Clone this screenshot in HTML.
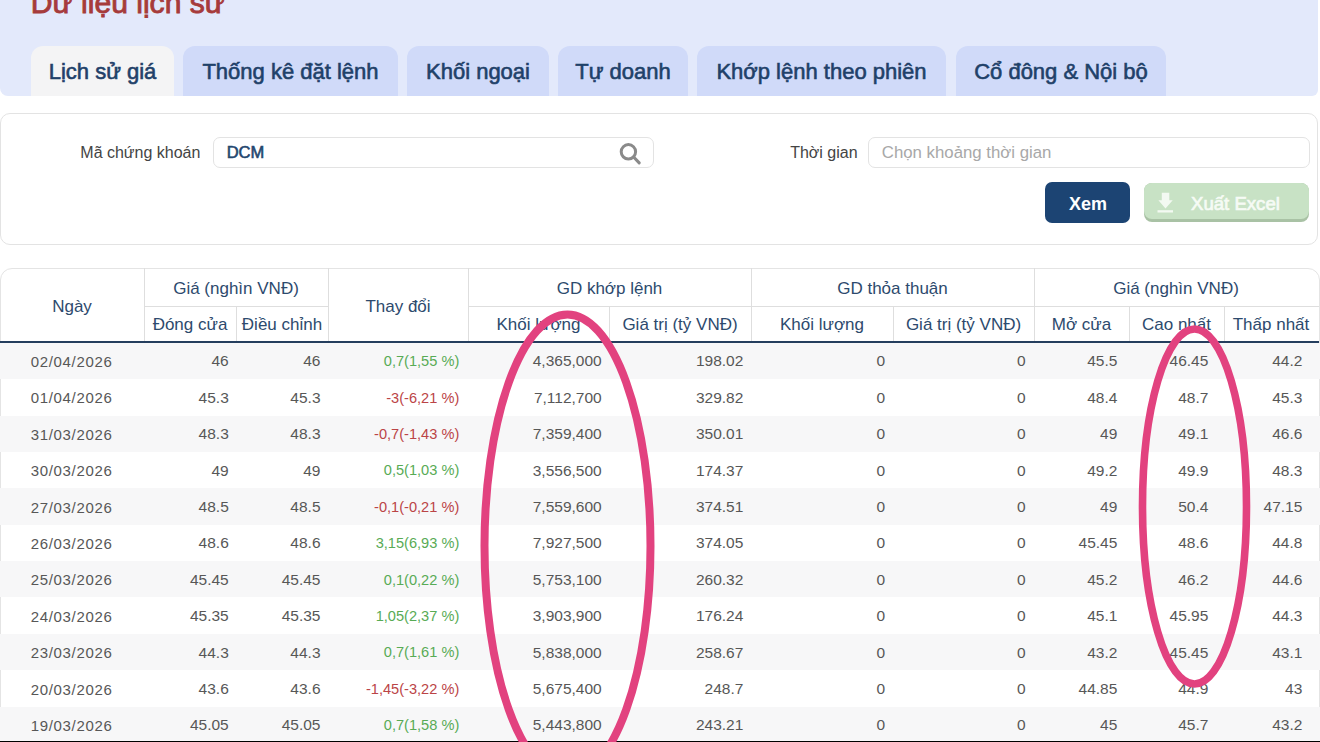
<!DOCTYPE html>
<html><head><meta charset="utf-8">
<style>
*{box-sizing:border-box;margin:0;padding:0}
html,body{width:1320px;height:742px;overflow:hidden;background:#fff;font-family:"Liberation Sans",sans-serif;position:relative}
.t{position:absolute;white-space:nowrap}
.box{position:absolute}
.hdr{left:0;top:-20px;width:1317.8px;height:115.5px;background:#e3e9fb;border-radius:0 0 6px 8px}
.tab{top:46px;height:49.5px;background:#d0daf9;border-radius:12px 12px 0 0}
.tab.act{background:#f4f4f5}
.tabt{color:#1f4169;-webkit-text-stroke:0.6px #1f4169}
.filter{left:0;top:113px;width:1317.5px;height:131.5px;border:1px solid #e3e3e3;border-radius:10px;background:#fff}
.inp{border:1px solid #e3e3e3;border-radius:7px;background:#fff}
.vl{position:absolute;width:1px;background:#dedede}
.hl{position:absolute;height:1px;background:#dedede}
.hc{color:#2d4a6d}
.row{position:absolute;left:0;width:1320px;height:36.4px}
.row.g{background:#f7f7f8}
.c{color:#575757}
.up{color:#58ab55}.dn{color:#bb4446}
</style></head><body>
<div class="box hdr"></div>

<div class="t" style="left:30.80px;top:-11.99px;font-size:30.1px;line-height:30.1px;color:#a63b3b;-webkit-text-stroke:0.9px #a63b3b">Dữ liệu lịch sử</div>
<div class="box tab act" style="left:31px;width:143px"></div>
<div class="t tabt" style="left:-197.50px;width:600px;text-align:center;top:60.77px;font-size:22px;line-height:22px;">Lịch sử giá</div>
<div class="box tab" style="left:183px;width:215px"></div>
<div class="t tabt" style="left:-9.50px;width:600px;text-align:center;top:60.77px;font-size:22px;line-height:22px;">Thống kê đặt lệnh</div>
<div class="box tab" style="left:407px;width:142px"></div>
<div class="t tabt" style="left:178.00px;width:600px;text-align:center;top:60.77px;font-size:22px;line-height:22px;">Khối ngoại</div>
<div class="box tab" style="left:558px;width:130px"></div>
<div class="t tabt" style="left:323.00px;width:600px;text-align:center;top:60.77px;font-size:22px;line-height:22px;">Tự doanh</div>
<div class="box tab" style="left:697px;width:249px"></div>
<div class="t tabt" style="left:521.50px;width:600px;text-align:center;top:60.77px;font-size:22px;line-height:22px;">Khớp lệnh theo phiên</div>
<div class="box tab" style="left:956px;width:210px"></div>
<div class="t tabt" style="left:761.00px;width:600px;text-align:center;top:60.77px;font-size:22px;line-height:22px;">Cổ đông &amp; Nội bộ</div>
<div class="box filter"></div>
<div class="t" style="left:80.30px;top:144.75px;font-size:16px;line-height:16px;color:#444">Mã chứng khoán</div>
<div class="box inp" style="left:212.5px;top:137.4px;width:441.5px;height:30.3px"></div>
<div class="t" style="left:226.70px;top:144.33px;font-size:16.5px;line-height:16.5px;color:#24476f;-webkit-text-stroke:0.6px #24476f">DCM</div>
<div class="t" style="left:790.20px;top:144.95px;font-size:16px;line-height:16px;color:#444">Thời gian</div>
<div class="box inp" style="left:867.5px;top:137.2px;width:442px;height:30.5px"></div>
<div class="t" style="left:881.80px;top:145.28px;font-size:16.8px;line-height:16.8px;color:#a8a8a8">Chọn khoảng thời gian</div>
<div class="box" style="left:1045px;top:182.3px;width:85px;height:40.4px;background:#1c4473;border-radius:7px"></div>
<div class="t" style="left:1069.00px;top:194.76px;font-size:18px;line-height:18px;color:#fff;font-weight:bold">Xem</div>
<div class="box" style="left:1144px;top:182.5px;width:164.5px;height:39.5px;background:#a9c2a5;border-radius:8px"></div>
<div class="box" style="left:1144px;top:182.5px;width:164.5px;height:36.8px;background:#c8e2c5;border-radius:8px"></div>
<div class="t" style="left:1191.00px;top:195.25px;font-size:18.6px;line-height:18.6px;color:#f6fbf5;-webkit-text-stroke:0.7px #f6fbf5">Xuất Excel</div>
<div class="box" style="left:0;top:268px;width:1319.5px;height:500px;border:1px solid #e4e4e4;border-radius:12px 12px 0 0"></div>
<div class="row g" style="top:343.00px;height:36.35px"></div>
<div class="row g" style="top:415.70px;height:36.35px"></div>
<div class="row g" style="top:488.40px;height:36.35px"></div>
<div class="row g" style="top:561.10px;height:36.35px"></div>
<div class="row g" style="top:633.80px;height:36.35px"></div>
<div class="row g" style="top:706.50px;height:36.35px"></div>
<div class="hl" style="left:144px;top:305.5px;width:184px"></div>
<div class="hl" style="left:468px;top:305.5px;width:851px"></div>
<div class="vl" style="left:144px;top:268px;height:74px"></div>
<div class="vl" style="left:236px;top:305.5px;height:36px"></div>
<div class="vl" style="left:328px;top:268px;height:74px"></div>
<div class="vl" style="left:468px;top:268px;height:74px"></div>
<div class="vl" style="left:609px;top:305.5px;height:36px"></div>
<div class="vl" style="left:751px;top:268px;height:74px"></div>
<div class="vl" style="left:893px;top:305.5px;height:36px"></div>
<div class="vl" style="left:1034px;top:268px;height:74px"></div>
<div class="vl" style="left:1129px;top:305.5px;height:36px"></div>
<div class="vl" style="left:1224px;top:305.5px;height:36px"></div>
<div class="box" style="left:0;top:340.6px;width:1319px;height:2px;background:#253e5e"></div>
<div class="t hc" style="left:-228.00px;width:600px;text-align:center;top:298.21px;font-size:17px;line-height:17px;">Ngày</div>
<div class="t hc" style="left:-64.00px;width:600px;text-align:center;top:280.21px;font-size:17px;line-height:17px;">Giá (nghìn VNĐ)</div>
<div class="t hc" style="left:-110.00px;width:600px;text-align:center;top:316.21px;font-size:17px;line-height:17px;">Đóng cửa</div>
<div class="t hc" style="left:-18.00px;width:600px;text-align:center;top:316.21px;font-size:17px;line-height:17px;">Điều chỉnh</div>
<div class="t hc" style="left:98.00px;width:600px;text-align:center;top:298.21px;font-size:17px;line-height:17px;">Thay đổi</div>
<div class="t hc" style="left:309.50px;width:600px;text-align:center;top:280.21px;font-size:17px;line-height:17px;">GD khớp lệnh</div>
<div class="t hc" style="left:238.50px;width:600px;text-align:center;top:316.21px;font-size:17px;line-height:17px;">Khối lượng</div>
<div class="t hc" style="left:380.00px;width:600px;text-align:center;top:316.21px;font-size:17px;line-height:17px;">Giá trị (tỷ VNĐ)</div>
<div class="t hc" style="left:592.50px;width:600px;text-align:center;top:280.21px;font-size:17px;line-height:17px;">GD thỏa thuận</div>
<div class="t hc" style="left:522.00px;width:600px;text-align:center;top:316.21px;font-size:17px;line-height:17px;">Khối lượng</div>
<div class="t hc" style="left:663.50px;width:600px;text-align:center;top:316.21px;font-size:17px;line-height:17px;">Giá trị (tỷ VNĐ)</div>
<div class="t hc" style="left:876.00px;width:600px;text-align:center;top:280.21px;font-size:17px;line-height:17px;">Giá (nghìn VNĐ)</div>
<div class="t hc" style="left:781.50px;width:600px;text-align:center;top:316.21px;font-size:17px;line-height:17px;">Mở cửa</div>
<div class="t hc" style="left:876.50px;width:600px;text-align:center;top:316.21px;font-size:17px;line-height:17px;">Cao nhất</div>
<div class="t hc" style="left:971.00px;width:600px;text-align:center;top:316.21px;font-size:17px;line-height:17px;">Thấp nhất</div>
<div class="t c" style="left:-228.40px;width:600px;text-align:center;top:353.90px;font-size:15px;line-height:15px;letter-spacing:0.65px">02/04/2026</div>
<div class="t c" style="right:1091.25px;top:353.48px;font-size:15.5px;line-height:15.5px;">46</div>
<div class="t c" style="right:999.50px;top:353.48px;font-size:15.5px;line-height:15.5px;">46</div>
<div class="t up" style="right:860.75px;top:354.24px;font-size:14.6px;line-height:14.6px;">0,7(1,55 %)</div>
<div class="t c" style="right:718.30px;top:353.48px;font-size:15.5px;line-height:15.5px;">4,365,000</div>
<div class="t c" style="right:576.70px;top:353.48px;font-size:15.5px;line-height:15.5px;">198.02</div>
<div class="t c" style="right:435.00px;top:353.48px;font-size:15.5px;line-height:15.5px;">0</div>
<div class="t c" style="right:294.30px;top:353.48px;font-size:15.5px;line-height:15.5px;">0</div>
<div class="t c" style="right:202.70px;top:353.48px;font-size:15.5px;line-height:15.5px;">45.5</div>
<div class="t c" style="right:111.70px;top:353.48px;font-size:15.5px;line-height:15.5px;">46.45</div>
<div class="t c" style="right:17.70px;top:353.48px;font-size:15.5px;line-height:15.5px;">44.2</div>
<div class="t c" style="left:-228.40px;width:600px;text-align:center;top:390.30px;font-size:15px;line-height:15px;letter-spacing:0.65px">01/04/2026</div>
<div class="t c" style="right:1091.25px;top:389.88px;font-size:15.5px;line-height:15.5px;">45.3</div>
<div class="t c" style="right:999.50px;top:389.88px;font-size:15.5px;line-height:15.5px;">45.3</div>
<div class="t dn" style="right:860.75px;top:390.64px;font-size:14.6px;line-height:14.6px;">-3(-6,21 %)</div>
<div class="t c" style="right:718.30px;top:389.88px;font-size:15.5px;line-height:15.5px;">7,112,700</div>
<div class="t c" style="right:576.70px;top:389.88px;font-size:15.5px;line-height:15.5px;">329.82</div>
<div class="t c" style="right:435.00px;top:389.88px;font-size:15.5px;line-height:15.5px;">0</div>
<div class="t c" style="right:294.30px;top:389.88px;font-size:15.5px;line-height:15.5px;">0</div>
<div class="t c" style="right:202.70px;top:389.88px;font-size:15.5px;line-height:15.5px;">48.4</div>
<div class="t c" style="right:111.70px;top:389.88px;font-size:15.5px;line-height:15.5px;">48.7</div>
<div class="t c" style="right:17.70px;top:389.88px;font-size:15.5px;line-height:15.5px;">45.3</div>
<div class="t c" style="left:-228.40px;width:600px;text-align:center;top:426.70px;font-size:15px;line-height:15px;letter-spacing:0.65px">31/03/2026</div>
<div class="t c" style="right:1091.25px;top:426.28px;font-size:15.5px;line-height:15.5px;">48.3</div>
<div class="t c" style="right:999.50px;top:426.28px;font-size:15.5px;line-height:15.5px;">48.3</div>
<div class="t dn" style="right:860.75px;top:427.04px;font-size:14.6px;line-height:14.6px;">-0,7(-1,43 %)</div>
<div class="t c" style="right:718.30px;top:426.28px;font-size:15.5px;line-height:15.5px;">7,359,400</div>
<div class="t c" style="right:576.70px;top:426.28px;font-size:15.5px;line-height:15.5px;">350.01</div>
<div class="t c" style="right:435.00px;top:426.28px;font-size:15.5px;line-height:15.5px;">0</div>
<div class="t c" style="right:294.30px;top:426.28px;font-size:15.5px;line-height:15.5px;">0</div>
<div class="t c" style="right:202.70px;top:426.28px;font-size:15.5px;line-height:15.5px;">49</div>
<div class="t c" style="right:111.70px;top:426.28px;font-size:15.5px;line-height:15.5px;">49.1</div>
<div class="t c" style="right:17.70px;top:426.28px;font-size:15.5px;line-height:15.5px;">46.6</div>
<div class="t c" style="left:-228.40px;width:600px;text-align:center;top:463.10px;font-size:15px;line-height:15px;letter-spacing:0.65px">30/03/2026</div>
<div class="t c" style="right:1091.25px;top:462.68px;font-size:15.5px;line-height:15.5px;">49</div>
<div class="t c" style="right:999.50px;top:462.68px;font-size:15.5px;line-height:15.5px;">49</div>
<div class="t up" style="right:860.75px;top:463.44px;font-size:14.6px;line-height:14.6px;">0,5(1,03 %)</div>
<div class="t c" style="right:718.30px;top:462.68px;font-size:15.5px;line-height:15.5px;">3,556,500</div>
<div class="t c" style="right:576.70px;top:462.68px;font-size:15.5px;line-height:15.5px;">174.37</div>
<div class="t c" style="right:435.00px;top:462.68px;font-size:15.5px;line-height:15.5px;">0</div>
<div class="t c" style="right:294.30px;top:462.68px;font-size:15.5px;line-height:15.5px;">0</div>
<div class="t c" style="right:202.70px;top:462.68px;font-size:15.5px;line-height:15.5px;">49.2</div>
<div class="t c" style="right:111.70px;top:462.68px;font-size:15.5px;line-height:15.5px;">49.9</div>
<div class="t c" style="right:17.70px;top:462.68px;font-size:15.5px;line-height:15.5px;">48.3</div>
<div class="t c" style="left:-228.40px;width:600px;text-align:center;top:499.50px;font-size:15px;line-height:15px;letter-spacing:0.65px">27/03/2026</div>
<div class="t c" style="right:1091.25px;top:499.08px;font-size:15.5px;line-height:15.5px;">48.5</div>
<div class="t c" style="right:999.50px;top:499.08px;font-size:15.5px;line-height:15.5px;">48.5</div>
<div class="t dn" style="right:860.75px;top:499.84px;font-size:14.6px;line-height:14.6px;">-0,1(-0,21 %)</div>
<div class="t c" style="right:718.30px;top:499.08px;font-size:15.5px;line-height:15.5px;">7,559,600</div>
<div class="t c" style="right:576.70px;top:499.08px;font-size:15.5px;line-height:15.5px;">374.51</div>
<div class="t c" style="right:435.00px;top:499.08px;font-size:15.5px;line-height:15.5px;">0</div>
<div class="t c" style="right:294.30px;top:499.08px;font-size:15.5px;line-height:15.5px;">0</div>
<div class="t c" style="right:202.70px;top:499.08px;font-size:15.5px;line-height:15.5px;">49</div>
<div class="t c" style="right:111.70px;top:499.08px;font-size:15.5px;line-height:15.5px;">50.4</div>
<div class="t c" style="right:17.70px;top:499.08px;font-size:15.5px;line-height:15.5px;">47.15</div>
<div class="t c" style="left:-228.40px;width:600px;text-align:center;top:535.90px;font-size:15px;line-height:15px;letter-spacing:0.65px">26/03/2026</div>
<div class="t c" style="right:1091.25px;top:535.48px;font-size:15.5px;line-height:15.5px;">48.6</div>
<div class="t c" style="right:999.50px;top:535.48px;font-size:15.5px;line-height:15.5px;">48.6</div>
<div class="t up" style="right:860.75px;top:536.24px;font-size:14.6px;line-height:14.6px;">3,15(6,93 %)</div>
<div class="t c" style="right:718.30px;top:535.48px;font-size:15.5px;line-height:15.5px;">7,927,500</div>
<div class="t c" style="right:576.70px;top:535.48px;font-size:15.5px;line-height:15.5px;">374.05</div>
<div class="t c" style="right:435.00px;top:535.48px;font-size:15.5px;line-height:15.5px;">0</div>
<div class="t c" style="right:294.30px;top:535.48px;font-size:15.5px;line-height:15.5px;">0</div>
<div class="t c" style="right:202.70px;top:535.48px;font-size:15.5px;line-height:15.5px;">45.45</div>
<div class="t c" style="right:111.70px;top:535.48px;font-size:15.5px;line-height:15.5px;">48.6</div>
<div class="t c" style="right:17.70px;top:535.48px;font-size:15.5px;line-height:15.5px;">44.8</div>
<div class="t c" style="left:-228.40px;width:600px;text-align:center;top:572.30px;font-size:15px;line-height:15px;letter-spacing:0.65px">25/03/2026</div>
<div class="t c" style="right:1091.25px;top:571.88px;font-size:15.5px;line-height:15.5px;">45.45</div>
<div class="t c" style="right:999.50px;top:571.88px;font-size:15.5px;line-height:15.5px;">45.45</div>
<div class="t up" style="right:860.75px;top:572.64px;font-size:14.6px;line-height:14.6px;">0,1(0,22 %)</div>
<div class="t c" style="right:718.30px;top:571.88px;font-size:15.5px;line-height:15.5px;">5,753,100</div>
<div class="t c" style="right:576.70px;top:571.88px;font-size:15.5px;line-height:15.5px;">260.32</div>
<div class="t c" style="right:435.00px;top:571.88px;font-size:15.5px;line-height:15.5px;">0</div>
<div class="t c" style="right:294.30px;top:571.88px;font-size:15.5px;line-height:15.5px;">0</div>
<div class="t c" style="right:202.70px;top:571.88px;font-size:15.5px;line-height:15.5px;">45.2</div>
<div class="t c" style="right:111.70px;top:571.88px;font-size:15.5px;line-height:15.5px;">46.2</div>
<div class="t c" style="right:17.70px;top:571.88px;font-size:15.5px;line-height:15.5px;">44.6</div>
<div class="t c" style="left:-228.40px;width:600px;text-align:center;top:608.70px;font-size:15px;line-height:15px;letter-spacing:0.65px">24/03/2026</div>
<div class="t c" style="right:1091.25px;top:608.28px;font-size:15.5px;line-height:15.5px;">45.35</div>
<div class="t c" style="right:999.50px;top:608.28px;font-size:15.5px;line-height:15.5px;">45.35</div>
<div class="t up" style="right:860.75px;top:609.04px;font-size:14.6px;line-height:14.6px;">1,05(2,37 %)</div>
<div class="t c" style="right:718.30px;top:608.28px;font-size:15.5px;line-height:15.5px;">3,903,900</div>
<div class="t c" style="right:576.70px;top:608.28px;font-size:15.5px;line-height:15.5px;">176.24</div>
<div class="t c" style="right:435.00px;top:608.28px;font-size:15.5px;line-height:15.5px;">0</div>
<div class="t c" style="right:294.30px;top:608.28px;font-size:15.5px;line-height:15.5px;">0</div>
<div class="t c" style="right:202.70px;top:608.28px;font-size:15.5px;line-height:15.5px;">45.1</div>
<div class="t c" style="right:111.70px;top:608.28px;font-size:15.5px;line-height:15.5px;">45.95</div>
<div class="t c" style="right:17.70px;top:608.28px;font-size:15.5px;line-height:15.5px;">44.3</div>
<div class="t c" style="left:-228.40px;width:600px;text-align:center;top:645.10px;font-size:15px;line-height:15px;letter-spacing:0.65px">23/03/2026</div>
<div class="t c" style="right:1091.25px;top:644.68px;font-size:15.5px;line-height:15.5px;">44.3</div>
<div class="t c" style="right:999.50px;top:644.68px;font-size:15.5px;line-height:15.5px;">44.3</div>
<div class="t up" style="right:860.75px;top:645.44px;font-size:14.6px;line-height:14.6px;">0,7(1,61 %)</div>
<div class="t c" style="right:718.30px;top:644.68px;font-size:15.5px;line-height:15.5px;">5,838,000</div>
<div class="t c" style="right:576.70px;top:644.68px;font-size:15.5px;line-height:15.5px;">258.67</div>
<div class="t c" style="right:435.00px;top:644.68px;font-size:15.5px;line-height:15.5px;">0</div>
<div class="t c" style="right:294.30px;top:644.68px;font-size:15.5px;line-height:15.5px;">0</div>
<div class="t c" style="right:202.70px;top:644.68px;font-size:15.5px;line-height:15.5px;">43.2</div>
<div class="t c" style="right:111.70px;top:644.68px;font-size:15.5px;line-height:15.5px;">45.45</div>
<div class="t c" style="right:17.70px;top:644.68px;font-size:15.5px;line-height:15.5px;">43.1</div>
<div class="t c" style="left:-228.40px;width:600px;text-align:center;top:681.50px;font-size:15px;line-height:15px;letter-spacing:0.65px">20/03/2026</div>
<div class="t c" style="right:1091.25px;top:681.08px;font-size:15.5px;line-height:15.5px;">43.6</div>
<div class="t c" style="right:999.50px;top:681.08px;font-size:15.5px;line-height:15.5px;">43.6</div>
<div class="t dn" style="right:860.75px;top:681.84px;font-size:14.6px;line-height:14.6px;">-1,45(-3,22 %)</div>
<div class="t c" style="right:718.30px;top:681.08px;font-size:15.5px;line-height:15.5px;">5,675,400</div>
<div class="t c" style="right:576.70px;top:681.08px;font-size:15.5px;line-height:15.5px;">248.7</div>
<div class="t c" style="right:435.00px;top:681.08px;font-size:15.5px;line-height:15.5px;">0</div>
<div class="t c" style="right:294.30px;top:681.08px;font-size:15.5px;line-height:15.5px;">0</div>
<div class="t c" style="right:202.70px;top:681.08px;font-size:15.5px;line-height:15.5px;">44.85</div>
<div class="t c" style="right:111.70px;top:681.08px;font-size:15.5px;line-height:15.5px;">44.9</div>
<div class="t c" style="right:17.70px;top:681.08px;font-size:15.5px;line-height:15.5px;">43</div>
<div class="t c" style="left:-228.40px;width:600px;text-align:center;top:717.90px;font-size:15px;line-height:15px;letter-spacing:0.65px">19/03/2026</div>
<div class="t c" style="right:1091.25px;top:717.48px;font-size:15.5px;line-height:15.5px;">45.05</div>
<div class="t c" style="right:999.50px;top:717.48px;font-size:15.5px;line-height:15.5px;">45.05</div>
<div class="t up" style="right:860.75px;top:718.24px;font-size:14.6px;line-height:14.6px;">0,7(1,58 %)</div>
<div class="t c" style="right:718.30px;top:717.48px;font-size:15.5px;line-height:15.5px;">5,443,800</div>
<div class="t c" style="right:576.70px;top:717.48px;font-size:15.5px;line-height:15.5px;">243.21</div>
<div class="t c" style="right:435.00px;top:717.48px;font-size:15.5px;line-height:15.5px;">0</div>
<div class="t c" style="right:294.30px;top:717.48px;font-size:15.5px;line-height:15.5px;">0</div>
<div class="t c" style="right:202.70px;top:717.48px;font-size:15.5px;line-height:15.5px;">45</div>
<div class="t c" style="right:111.70px;top:717.48px;font-size:15.5px;line-height:15.5px;">45.7</div>
<div class="t c" style="right:17.70px;top:717.48px;font-size:15.5px;line-height:15.5px;">43.2</div>
<div class="box" style="left:0;top:740.9px;width:1320px;height:1.2px;background:#000"></div>
<svg style="position:absolute;left:0;top:0" width="1320" height="742" viewBox="0 0 1320 742">
<circle cx="628.4" cy="151.8" r="7.2" fill="none" stroke="#8a8a8a" stroke-width="3"/>
<line x1="633.6" y1="157" x2="639.2" y2="162.8" stroke="#8a8a8a" stroke-width="3.1" stroke-linecap="round"/>
<path d="M1161.8 192.7 H1169.3 V200.2 H1172.7 L1165.5 208.4 L1158.4 200.2 H1161.8 Z" fill="#f3f9f2"/>
<rect x="1157.5" y="210.2" width="15.5" height="2.3" fill="#f3f9f2"/>
<ellipse cx="567.5" cy="546" rx="83" ry="231.5" fill="none" stroke="#e2427f" stroke-width="8"/>
<ellipse cx="1194.5" cy="506.5" rx="52" ry="177.5" fill="none" stroke="#e2427f" stroke-width="7.6"/>
</svg>
</body></html>
